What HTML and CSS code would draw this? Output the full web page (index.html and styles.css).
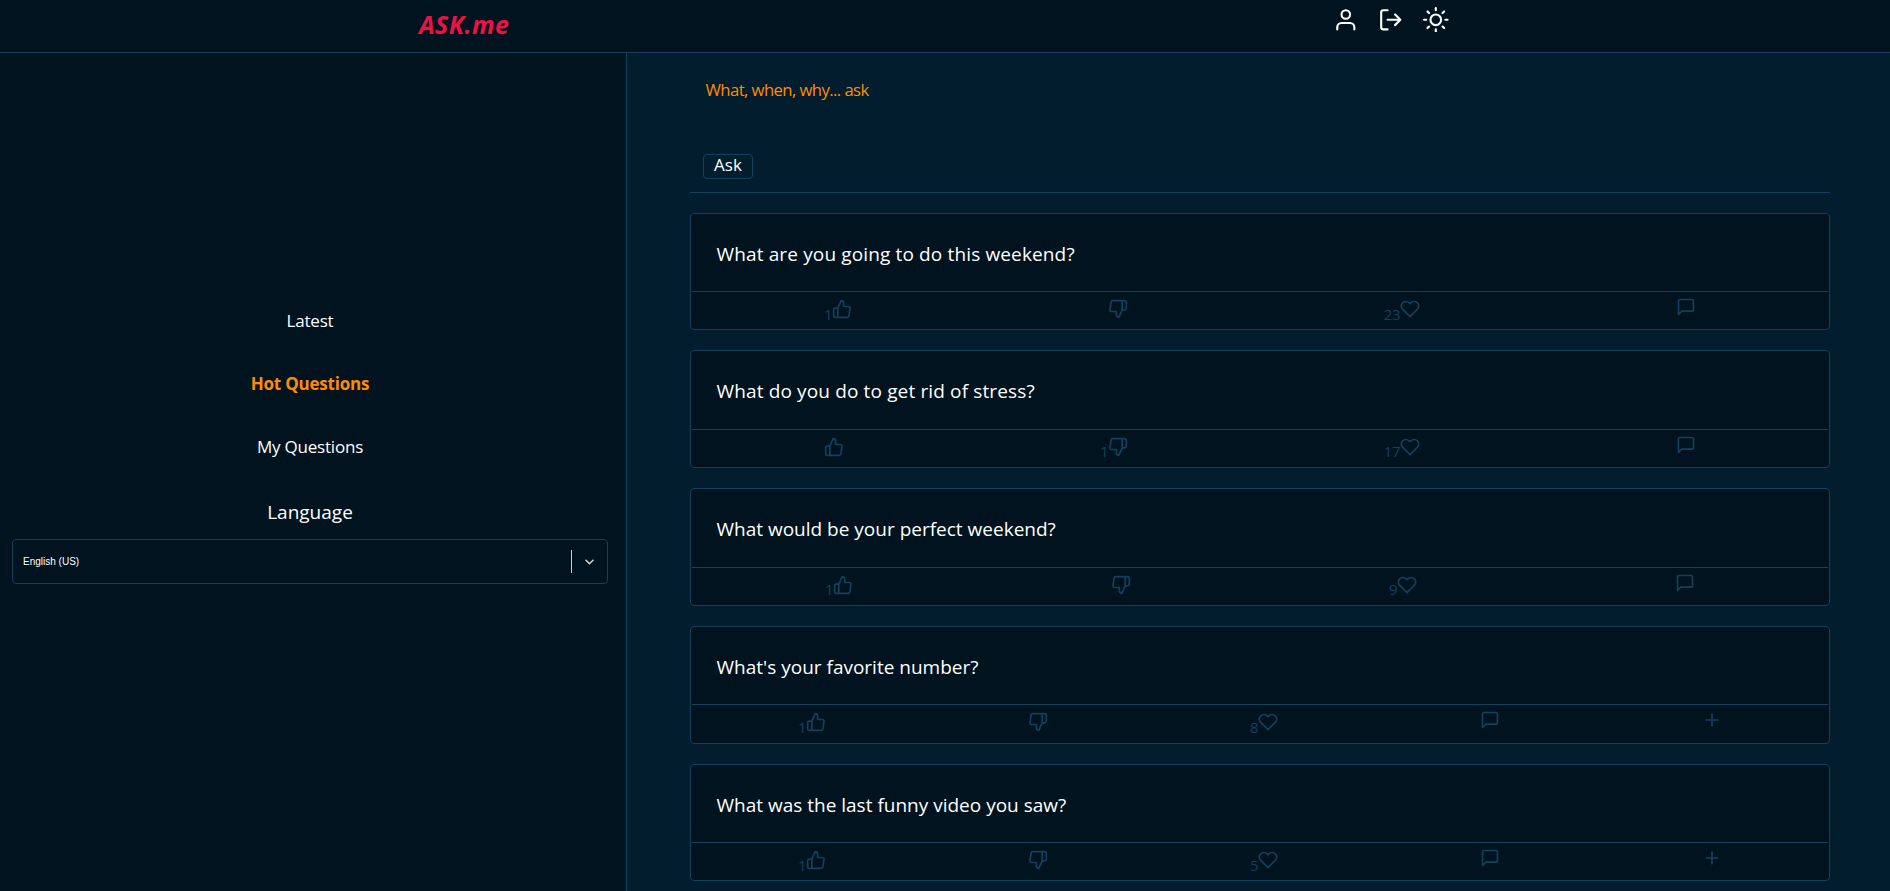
FILE: index.html
```
<!DOCTYPE html>
<html lang="en">
<head>
<meta charset="utf-8">
<title>ASK.me</title>
<link rel="stylesheet" href="styles.css">
</head>
<body>
<svg class="sprite" aria-hidden="true">
  <symbol id="up" viewBox="0 0 24 24"><path d="M14 9V5a3 3 0 0 0-3-3l-4 9v11h11.28a2 2 0 0 0 2-1.7l1.38-9a2 2 0 0 0-2-2.3zM7 22H4a2 2 0 0 1-2-2v-7a2 2 0 0 1 2-2h3"/></symbol>
  <symbol id="down" viewBox="0 0 24 24"><path d="M10 15v4a3 3 0 0 0 3 3l4-9V2H5.72a2 2 0 0 0-2 1.7l-1.38 9a2 2 0 0 0 2 2.3zm7-13h2.67A2.31 2.31 0 0 1 22 4v7a2.31 2.31 0 0 1-2.33 2H17"/></symbol>
  <symbol id="heart" viewBox="0 0 24 24"><path d="M20.84 4.61a5.5 5.5 0 0 0-7.78 0L12 5.67l-1.06-1.06a5.5 5.5 0 0 0-7.78 7.78l1.06 1.06L12 21.23l7.78-7.78 1.06-1.06a5.5 5.5 0 0 0 0-7.78z"/></symbol>
  <symbol id="chat" viewBox="0 0 24 24"><path d="M21 15a2 2 0 0 1-2 2H7l-4 4V5a2 2 0 0 1 2-2h14a2 2 0 0 1 2 2z"/></symbol>
  <symbol id="plus" viewBox="0 0 24 24"><path d="M12 5v14M5 12h14"/></symbol>
</svg>
<header class="header">
  <a class="logo">ASK.me</a>
  <nav class="tools">
    <svg class="tool" viewBox="0 0 24 24"><path d="M20 21v-2a4 4 0 0 0-4-4H8a4 4 0 0 0-4 4v2"/><circle cx="12" cy="7" r="4"/></svg>
    <svg class="tool" viewBox="0 0 24 24"><path d="M9 21H5a2 2 0 0 1-2-2V5a2 2 0 0 1 2-2h4M16 17l5-5-5-5M21 12H9"/></svg>
    <svg class="tool" viewBox="0 0 24 24"><circle cx="12" cy="12" r="5"/><path d="M12 1v2M12 21v2M4.22 4.22l1.42 1.42M18.36 18.36l1.42 1.42M1 12h2M21 12h2M4.22 19.78l1.42-1.42M18.36 5.64l1.42-1.42"/></svg>
  </nav>
</header>
<div class="layout">
  <aside class="sidebar">
    <a class="link">Latest</a>
    <a class="link active">Hot Questions</a>
    <a class="link">My Questions</a>
    <div class="language">Language</div>
    <div class="select">
      <span class="value">English (US)</span>
      <span class="separator"></span>
      <svg class="chevron" viewBox="0 0 20 20"><path d="M4.516 7.548c0.436-0.446 1.043-0.481 1.576 0l3.908 3.747 3.908-3.747c0.533-0.481 1.141-0.446 1.574 0 0.436 0.445 0.408 1.197 0 1.615-0.406 0.418-4.695 4.502-4.695 4.502-0.217 0.223-0.502 0.335-0.787 0.335s-0.57-0.112-0.789-0.335c0 0-4.287-4.084-4.695-4.502s-0.436-1.17 0-1.615z"/></svg>
    </div>
  </aside>
  <main class="main">
    <section class="composer">
      <div class="prompt">What, when, why... ask</div>
      <button class="ask">Ask</button>
    </section>
    <article class="card">
      <h2 class="question wide">What are you going to do this weekend?</h2>
      <div class="actions row1">
        <span class="action"><span class="count">1</span><svg><use href="#up"/></svg></span>
        <span class="action"><svg><use href="#down"/></svg></span>
        <span class="action"><span class="count">23</span><svg><use href="#heart"/></svg></span>
        <span class="action plain"><svg><use href="#chat"/></svg></span>
      </div>
    </article>
    <article class="card">
      <h2 class="question wide">What do you do to get rid of stress?</h2>
      <div class="actions row2">
        <span class="action"><svg><use href="#up"/></svg></span>
        <span class="action"><span class="count">1</span><svg><use href="#down"/></svg></span>
        <span class="action"><span class="count">17</span><svg><use href="#heart"/></svg></span>
        <span class="action plain"><svg><use href="#chat"/></svg></span>
      </div>
    </article>
    <article class="card">
      <h2 class="question">What would be your perfect weekend?</h2>
      <div class="actions row3">
        <span class="action"><span class="count">1</span><svg><use href="#up"/></svg></span>
        <span class="action"><svg><use href="#down"/></svg></span>
        <span class="action"><span class="count">9</span><svg><use href="#heart"/></svg></span>
        <span class="action plain"><svg><use href="#chat"/></svg></span>
      </div>
    </article>
    <article class="card">
      <h2 class="question">What's your favorite number?</h2>
      <div class="actions own">
        <span class="action"><span class="count">1</span><svg><use href="#up"/></svg></span>
        <span class="action"><svg><use href="#down"/></svg></span>
        <span class="action"><span class="count">8</span><svg><use href="#heart"/></svg></span>
        <span class="action plain"><svg><use href="#chat"/></svg></span>
        <span class="action plain"><svg><use href="#plus"/></svg></span>
      </div>
    </article>
    <article class="card">
      <h2 class="question">What was the last funny video you saw?</h2>
      <div class="actions own">
        <span class="action"><span class="count">1</span><svg><use href="#up"/></svg></span>
        <span class="action"><svg><use href="#down"/></svg></span>
        <span class="action"><span class="count">5</span><svg><use href="#heart"/></svg></span>
        <span class="action plain"><svg><use href="#chat"/></svg></span>
        <span class="action plain"><svg><use href="#plus"/></svg></span>
      </div>
    </article>
  </main>
</div>
</body>
</html>
```
FILE: styles.css
```
* { box-sizing: border-box; }
body {
  margin: 0;
  height: 891px;
  overflow: hidden;
  display: flex;
  flex-direction: column;
  background: #021d2e;
  color: #fff;
  font-family: "Open Sans", "Noto Sans", sans-serif;
}
.sprite { display: none; }
svg {
  flex: none;
  fill: none;
  stroke: currentColor;
  stroke-width: 2;
  stroke-linecap: round;
  stroke-linejoin: round;
}
.header {
  flex: none;
  height: 53px;
  display: flex;
  justify-content: space-between;
  align-items: flex-start;
  padding: 6.5px 441.5px 0 419px;
  background: #00131f;
  border-bottom: 1px solid #12415d;
}
.logo {
  color: #ee1144;
  font-size: 25px;
  line-height: 34px;
  font-weight: 700;
  font-style: italic;
  letter-spacing: 0.4px;
}
.tools { display: flex; gap: 19.3px; }
.tool { width: 25.6px; height: 25.6px; }
.layout { flex: 1; min-height: 0; display: flex; }
.sidebar {
  width: 627px;
  flex: none;
  padding: 236px 18px 0 12px;
  display: flex;
  flex-direction: column;
  align-items: center;
  background: #00131f;
  border-right: 1px solid #12415d;
}
.link { font-size: 17px; line-height: 63px; letter-spacing: -0.2px; }
.active { color: #ff8c00; font-weight: 700; }
.language { margin-top: 19px; font-size: 19px; line-height: 30px; }
.select {
  width: 596px;
  height: 45px;
  margin-top: 12px;
  display: flex;
  align-items: center;
  border: 1px solid #12415d;
  border-radius: 4px;
  font-family: "Liberation Sans", sans-serif;
  font-size: 10px;
  padding: 0 10px;
}
.value { flex: 1; }
.separator { width: 1px; height: 23px; background: #ccc; }
.chevron { width: 15px; height: 15px; margin-left: 10px; fill: #ccc; stroke: none; }
.main { flex: 1; padding: 0 60px 0 63px; }
.composer {
  height: 140px;
  margin-bottom: 19.7px;
  padding: 21px 13px 0;
  border-bottom: 1px solid #12415d;
}
.prompt {
  height: 80px;
  padding-left: 2.5px;
  color: #ff8c00;
  font-size: 16.7px;
  line-height: 32px;
  letter-spacing: -0.58px;
}
.ask {
  display: block;
  width: 50px;
  height: 25px;
  padding: 0 0 3px;
  color: #fff;
  background: none;
  border: 1px solid #12415d;
  border-radius: 4px;
  font: 17px/20px "Open Sans", "Noto Sans", sans-serif;
}
.card {
  height: 117.75px;
  margin-bottom: 20px;
  padding: 0 1px;
  background: #00131f;
  border: 1px solid #12415d;
  border-radius: 4px;
}
.question {
  margin: 0;
  height: 77.5px;
  padding: 25px 24.5px 0;
  font-size: 19px;
  line-height: 30px;
  font-weight: 400;
  white-space: nowrap;
}
.wide { letter-spacing: 0.14px; }
.actions {
  display: grid;
  height: 37px;
  border-top: 1px solid #12415d;
  color: #12415d;
}
.row1 { grid-template-columns: 160px 276px 292px 276px; }
.row2 { grid-template-columns: 152px 284px 292px 276px; }
.row3 { grid-template-columns: 161px 278px 286px 278px; }
.own { grid-template-columns: 134px 222px 230px 222px 222px; }
.action { display: flex; justify-content: flex-end; padding-top: 7px; }
.action svg { width: 20px; height: 20px; }
.plain { padding-top: 5px; }
.count {
  font-size: 15px;
  line-height: 20px;
  padding-top: 4.5px;
  letter-spacing: -0.5px;
}
```
